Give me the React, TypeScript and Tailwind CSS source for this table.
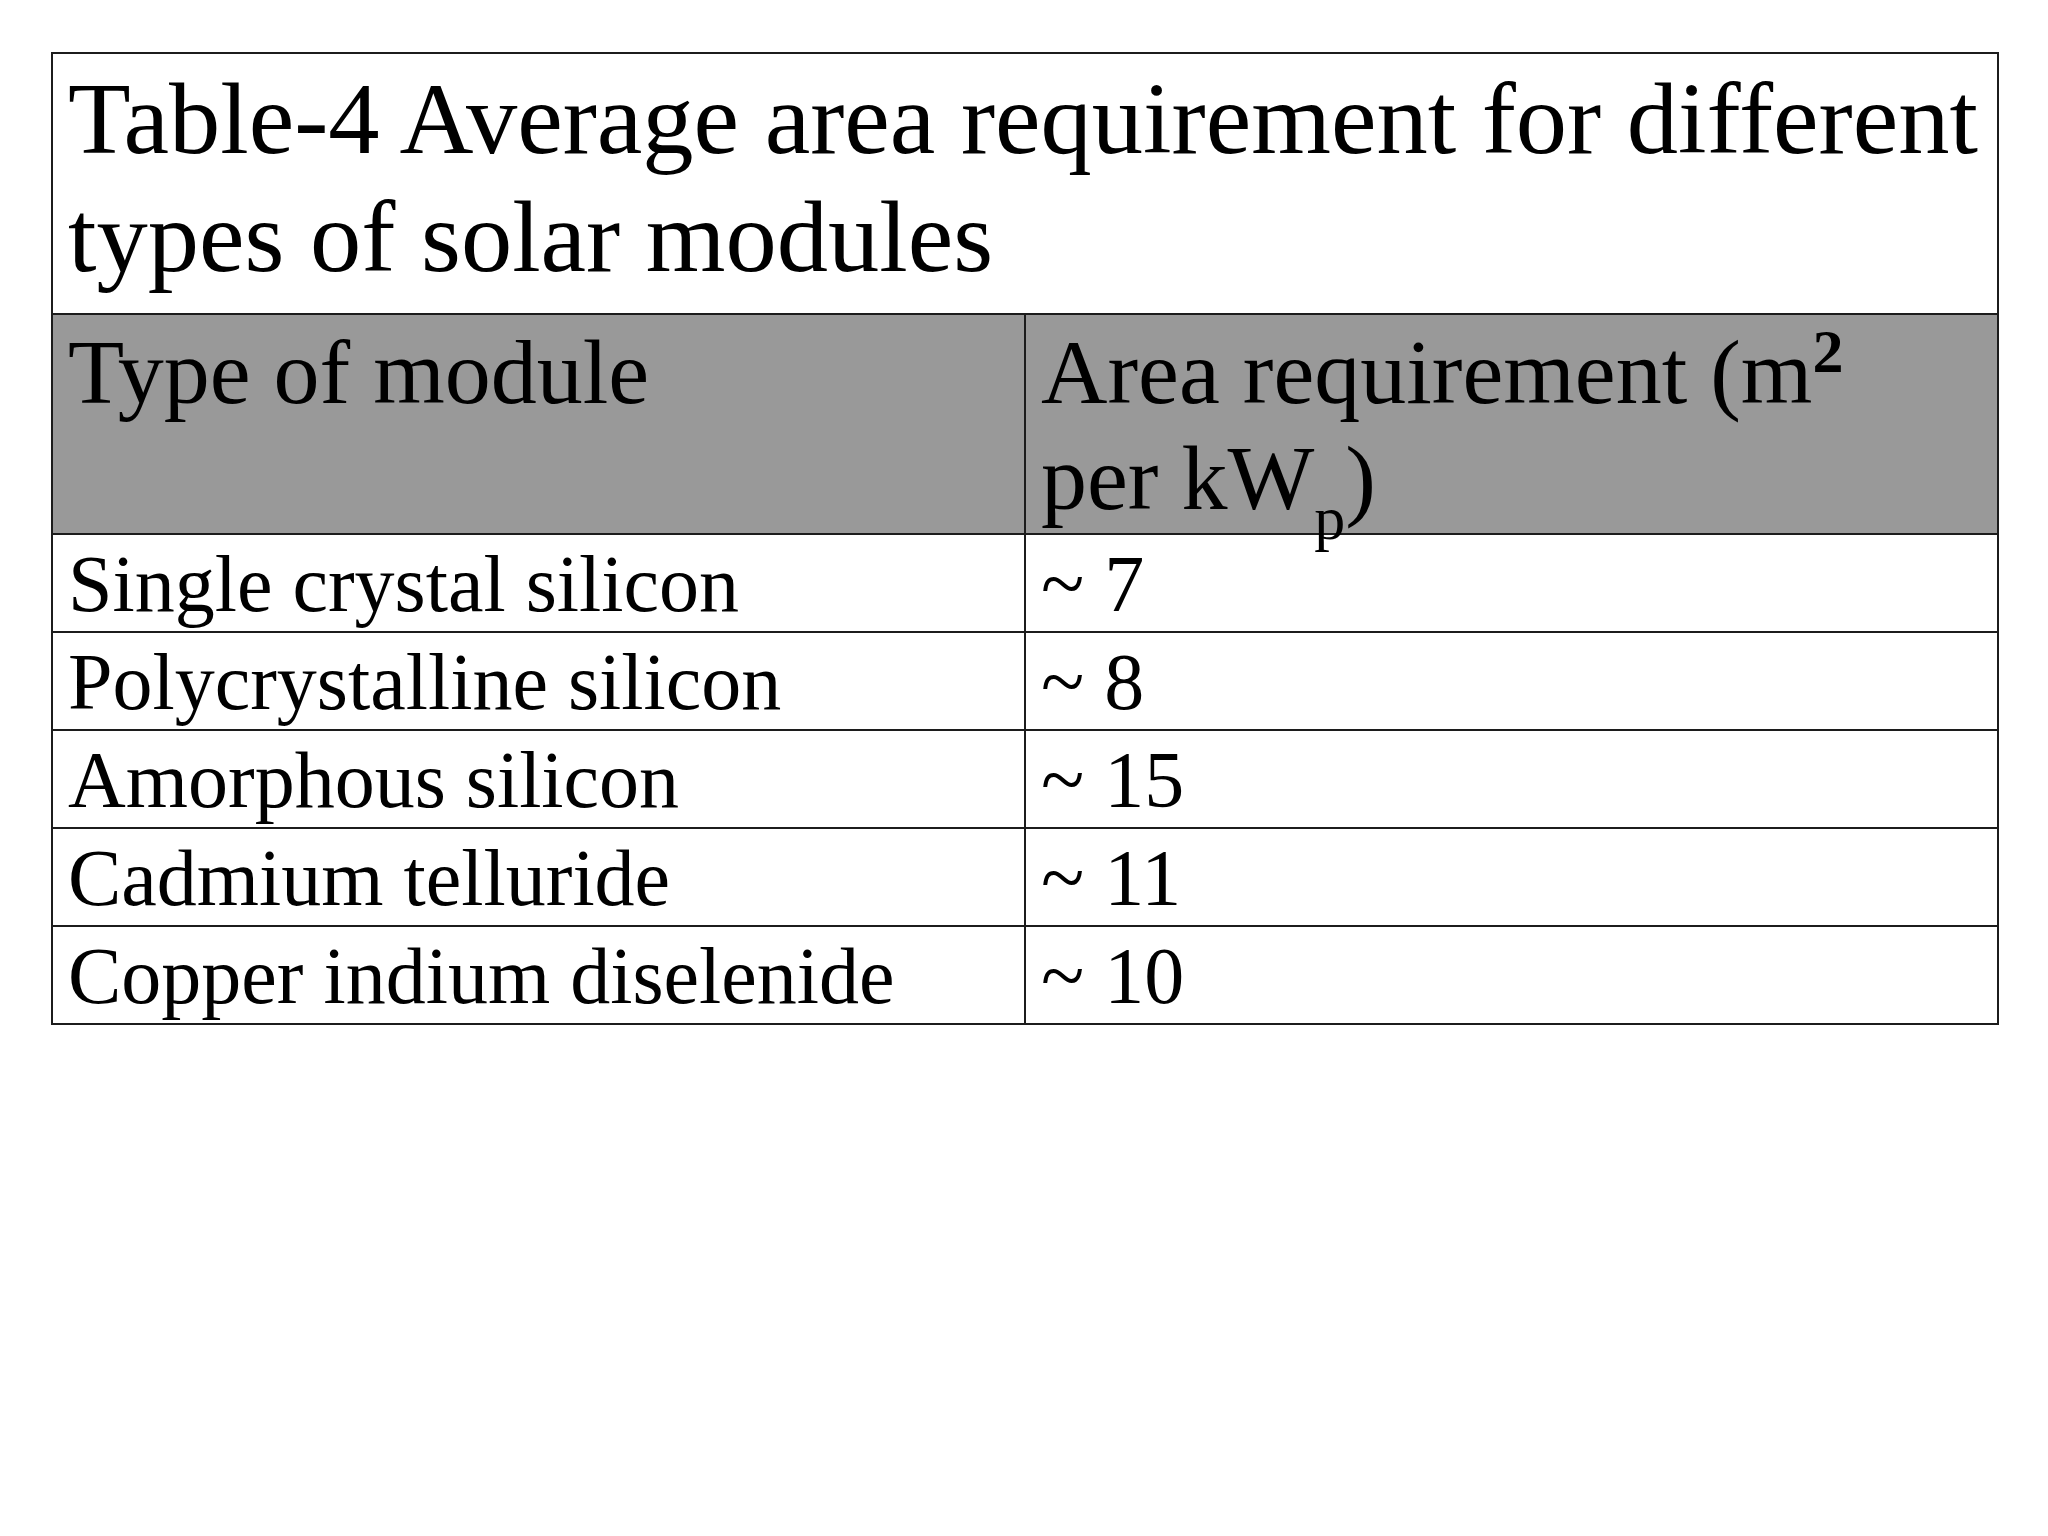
const rows = [
  ['Single crystal silicon', '~ 7'],
  ['Polycrystalline silicon', '~ 8'],
  ['Amorphous silicon', '~ 15'],
  ['Cadmium telluride', '~ 11'],
  ['Copper indium diselenide', '~ 10'],
];

export default function App() {
  return (
    <div className="min-h-[1536px] w-[2048px] bg-white pl-[51px] pt-[52px] font-['Liberation_Serif',serif] text-black">
      <table className="w-[1946px] table-fixed border-collapse">
        <colgroup>
          <col className="w-[973px]" />
          <col className="w-[973px]" />
        </colgroup>
        <tbody>
          <tr className="h-[261px]">
            <td
              colSpan={2}
              className="border-2 border-[#1c1c1c] pl-[15px] pr-[2px] pt-[6px] align-top text-[102.5px] leading-[118px]"
            >
              Table-4 Average area requirement for different types of solar modules
            </td>
          </tr>
          <tr className="h-[220px] bg-[#999999]">
            <td className="border-2 border-[#1c1c1c] px-[15px] pt-[4px] align-top text-[92px] leading-[106px]">
              Type of module
            </td>
            <td className="border-2 border-[#1c1c1c] px-[15px] pt-[4px] align-top text-[92px] leading-[106px]">
              Area requirement (m
              <span className="relative -top-[31px] text-[62px] font-bold leading-none">2</span>
              <br />
              per kW
              <span className="relative top-[30px] text-[62px] leading-none">p</span>)
            </td>
          </tr>
          {rows.map(([name, area]) => (
            <tr key={name} className="h-[98px]">
              <td className="border-2 border-[#1c1c1c] px-[15px] pt-[3px] align-top text-[80px] leading-[92px]">
                {name}
              </td>
              <td className="border-2 border-[#1c1c1c] px-[15px] pt-[3px] align-top text-[80px] leading-[92px]">
                {area}
              </td>
            </tr>
          ))}
        </tbody>
      </table>
    </div>
  );
}
